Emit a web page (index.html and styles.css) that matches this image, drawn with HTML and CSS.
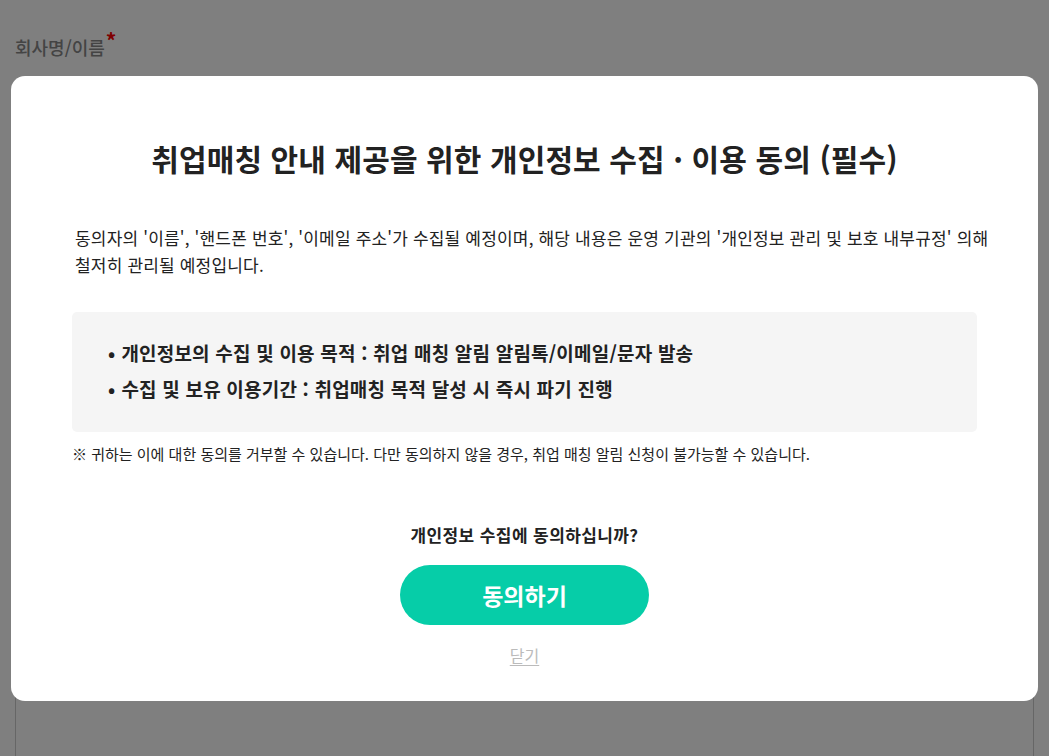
FILE: index.html
```html
<!DOCTYPE html>
<html lang="ko">
<head>
<meta charset="utf-8">
<title>개인정보 수집 동의</title>
<link rel="stylesheet" href="styles.css">
</head>
<body>
<div class="page">
  <div class="form-label">회사명/이름<span class="req">*</span></div>
  <div class="form-field"></div>
</div>
<div class="overlay">
  <div class="modal">
    <h1 class="modal-title">취업매칭 안내 제공을 위한 개인정보 수집 · 이용 동의 (필수)</h1>
    <p class="modal-desc">동의자의 '이름', '핸드폰 번호', '이메일 주소'가 수집될 예정이며, 해당 내용은 운영 기관의 '개인정보 관리 및 보호 내부규정' 의해<br>철저히 관리될 예정입니다.</p>
    <ul class="info-box">
      <li>개인정보의 수집 및 이용 목적 : 취업 매칭 알림 알림톡/이메일/문자 발송</li>
      <li>수집 및 보유 이용기간 : 취업매칭 목적 달성 시 즉시 파기 진행</li>
    </ul>
    <p class="notice">※ 귀하는 이에 대한 동의를 거부할 수 있습니다. 다만 동의하지 않을 경우, 취업 매칭 알림 신청이 불가능할 수 있습니다.</p>
    <p class="question">개인정보 수집에 동의하십니까?</p>
    <button class="btn-agree" type="button">동의하기</button>
    <a class="btn-close" href="#">닫기</a>
  </div>
</div>
</body>
</html>
```

FILE: styles.css
```css
* { box-sizing: border-box; }
html, body { margin: 0; padding: 0; }
body {
  font-family: "Noto Sans CJK KR", "Noto Sans", sans-serif;
  background: #fff;
  color: #222;
  height: 756px;
  overflow: hidden;
}
.page {
  padding: 33px 15px 0 15px;
}
.form-label {
  font-size: 18px;
  line-height: 26px;
  color: #888;
  font-weight: 500;
}
.req {
  color: #ff0000;
  font-size: 21px;
  font-weight: 700;
  position: relative;
  top: -6px;
  margin-left: 1px;
}
.form-field {
  margin-top: 20px;
  height: 700px;
  border: 1px solid #ccc;
  border-radius: 4px;
  width: 1019px;
}
.overlay {
  position: fixed;
  inset: 0;
  background: rgba(0, 0, 0, 0.5);
  display: flex;
  justify-content: center;
  align-items: flex-start;
  padding-top: 76px;
}
.modal {
  width: 1027px;
  background: #fff;
  border-radius: 14px;
  padding: 60px 61px 32px;
  display: flex;
  flex-direction: column;
  align-items: center;
}
.modal-title {
  margin: 0;
  font-size: 30px;
  line-height: 44px;
  font-weight: 700;
  color: #222;
  letter-spacing: 0.1px;
}
.modal-desc {
  align-self: stretch;
  margin: 44px 0 0;
  font-size: 17px;
  line-height: 27px;
  color: #222;
  padding-left: 3px;
  letter-spacing: 0.18px;
  white-space: nowrap;
}
.info-box {
  align-self: stretch;
  margin: 34px 0 0;
  padding: 23px 36px 25px;
  background: #f5f5f5;
  border-radius: 5px;
  list-style: none;
}
.info-box li {
  font-size: 19px;
  line-height: 36px;
  font-weight: 700;
  color: #222;
  letter-spacing: 0.2px;
}
.info-box li::before {
  content: "•";
  margin-right: 6px;
}
.notice {
  align-self: stretch;
  margin: 12px 0 0;
  font-size: 15px;
  line-height: 20px;
  color: #222;
}
.question {
  margin: 59px 0 0;
  font-size: 17px;
  line-height: 24px;
  font-weight: 700;
  color: #222;
  letter-spacing: 0.4px;
}
.btn-agree {
  margin-top: 18px;
  width: 249px;
  height: 60px;
  border: none;
  border-radius: 30px;
  background: #06cda8;
  color: #fff;
  font-family: inherit;
  font-size: 23px;
  font-weight: 700;
  cursor: pointer;
}
.btn-close {
  margin-top: 18px;
  margin-bottom: 2px;
  font-size: 16px;
  line-height: 24px;
  color: #bbb;
  text-decoration: underline;
  text-underline-offset: 3px;
}
```
